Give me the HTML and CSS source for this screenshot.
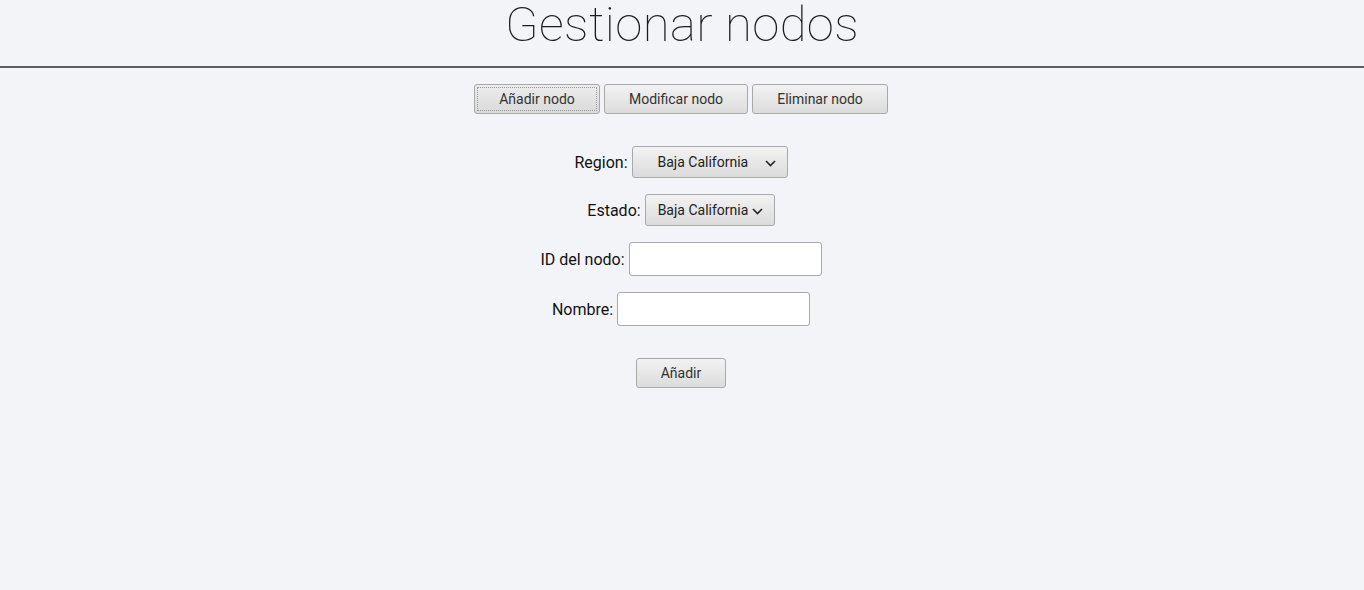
FILE: index.html
```html
<!DOCTYPE html>
<html lang="es">
<head>
<meta charset="utf-8">
<title>Gestionar nodos</title>
<link rel="stylesheet" href="styles.css">
</head>
<body>
<header class="header">
  <h1 class="title">Gestionar nodos</h1>
</header>
<main class="main">
  <nav class="tabs">
    <button class="btn btn-tab is-active">Añadir nodo</button>
    <button class="btn btn-tab tab-mod">Modificar nodo</button>
    <button class="btn btn-tab tab-del">Eliminar nodo</button>
  </nav>
  <form class="form">
    <div class="row">
      <label class="label">Region:</label>
      <div class="select select-region">
        <span class="select-text">Baja California</span>
        <svg class="chev" width="11" height="7" viewBox="0 0 11 7"><path d="M1 1l4.5 4.5L10 1" fill="none" stroke="#222" stroke-width="1.6"/></svg>
      </div>
    </div>
    <div class="row">
      <label class="label">Estado:</label>
      <div class="select select-estado">
        <span class="select-text">Baja California</span>
        <svg class="chev" width="11" height="7" viewBox="0 0 11 7"><path d="M1 1l4.5 4.5L10 1" fill="none" stroke="#222" stroke-width="1.6"/></svg>
      </div>
    </div>
    <div class="row row-input">
      <label class="label">ID del nodo:</label>
      <input class="input" type="text">
    </div>
    <div class="row row-input">
      <label class="label">Nombre:</label>
      <input class="input" type="text">
    </div>
    <div class="row row-submit">
      <button type="button" class="btn btn-submit">Añadir</button>
    </div>
  </form>
</main>
</body>
</html>
```

FILE: styles.css
```css
html, body {
  margin: 0;
  padding: 0;
  background: #f3f4f8;
  font-family: Roboto, "Liberation Sans", sans-serif;
  color: #1a1a1a;
}
.header {
  height: 66px;
  border-bottom: 2px solid #5f5f5f;
  display: flex;
  justify-content: center;
}
.title {
  margin: 0;
  font-weight: 100;
  font-size: 49px;
  line-height: 50px;
  color: #1b1b1b;
  letter-spacing: 0.4px;
}
.main {
  display: flex;
  flex-direction: column;
  align-items: center;
  padding-top: 16px;
  padding-right: 2px;
}
.tabs {
  display: flex;
  gap: 4px;
}
.btn {
  font-family: Roboto, "Liberation Sans", sans-serif;
  font-size: 14px;
  color: #333;
  height: 30px;
  border: 1px solid #a9a9a9;
  border-radius: 3px;
  background: linear-gradient(#f2f2f2, #dcdcdc);
  padding: 0;
}
.btn-tab { width: 126px; }
.tab-mod { width: 144px; }
.tab-del { width: 136px; }
.btn-tab.is-active {
  outline: 1px dotted #999;
  outline-offset: -4px;
  background: linear-gradient(#ececec, #dadada);
}
.form {
  display: flex;
  flex-direction: column;
  align-items: center;
  padding-top: 32px;
}
.row {
  display: flex;
  align-items: center;
  gap: 4px;
  margin-bottom: 16px;
}
.label {
  font-size: 16px;
  color: #111;
}
.select {
  position: relative;
  height: 32px;
  box-sizing: border-box;
  border: 1px solid #a9a9a9;
  border-radius: 3px;
  background: linear-gradient(#f2f2f2, #dcdcdc);
  display: flex;
  align-items: center;
  font-size: 14px;
  color: #222;
}
.select-region { width: 156px; padding-left: 25px; }
.select-estado { width: 130px; padding-left: 12px; }
.chev { position: absolute; right: 11px; top: 13px; }
.input {
  width: 193px;
  height: 34px;
  box-sizing: border-box;
  border: 1px solid #a9a9a9;
  border-radius: 3px;
  background: #fff;
  margin: 0;
}
.row-submit { margin-top: 16px; }
.btn-submit { width: 90px; }
```
